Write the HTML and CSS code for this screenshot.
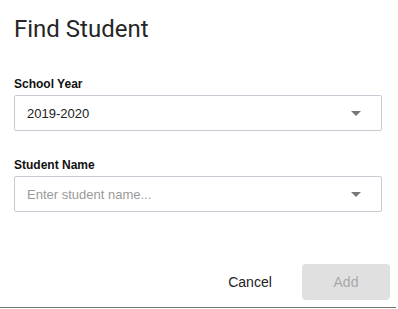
FILE: index.html
```html
<!DOCTYPE html>
<html lang="en">
<head>
    <meta charset="UTF-8">
    <meta name="viewport" content="width=device-width, initial-scale=1.0">
    <title>Find Student</title>
    <link rel="stylesheet" href="styles.css">
</head>
<body>
    <div class="dialog">
        <h1 class="dialog-title">Find Student</h1>

        <!-- School year -->
        <div class="field">
            <label class="field-label">School Year</label>
            <div class="select">
                <span class="select-value">2019-2020</span>
                <span class="select-arrow"></span>
            </div>
        </div>

        <!-- Student name -->
        <div class="field field-second">
            <label class="field-label">Student Name</label>
            <div class="select">
                <span class="select-value placeholder">Enter student name...</span>
                <span class="select-arrow"></span>
            </div>
        </div>

        <div class="dialog-actions">
            <button class="btn btn-text">Cancel</button>
            <button class="btn btn-disabled" disabled>Add</button>
        </div>
    </div>
</body>
</html>
```

FILE: styles.css
```css
body {
    margin: 0;
    padding: 0;
    background-color: #fff;
    font-family: "Liberation Sans", Arial, sans-serif;
}
.dialog {
    box-sizing: border-box;
    width: 396px;
    height: 308px;
    padding: 15px 14px 0 14px;
    border-bottom: 1px solid #737373;
}
.dialog-title {
    margin: 0;
    font-family: Roboto, sans-serif;
    font-weight: 400;
    font-size: 24px;
    line-height: 28px;
    color: #262626;
}
.field {
    margin-top: 34px;
}
.field-second {
    margin-top: 27px;
}
.field-label {
    display: block;
    font-size: 12px;
    font-weight: bold;
    line-height: 14px;
    color: #111;
    margin-bottom: 4px;
}
.select {
    box-sizing: border-box;
    height: 36px;
    border: 1px solid #cac9d4;
    border-radius: 2px;
    display: flex;
    align-items: center;
    justify-content: space-between;
    padding: 0 20px 0 12px;
}
.select-value {
    font-size: 13px;
    color: #222;
}
.select-value.placeholder {
    color: #9a9a9a;
}
.select-arrow {
    width: 0;
    height: 0;
    border-left: 5px solid transparent;
    border-right: 5px solid transparent;
    border-top: 5px solid #777;
    margin-top: 1px;
}
.dialog-actions {
    display: flex;
    justify-content: flex-end;
    gap: 8px;
    margin-top: 52px;
    margin-right: -8px;
}
.btn {
    min-width: 88px;
    height: 36px;
    border: none;
    border-radius: 4px;
    font-family: "Liberation Sans", Arial, sans-serif;
    font-size: 14px;
    padding: 0 16px;
    background: none;
}
.btn-text {
    color: #222;
    cursor: pointer;
}
.btn-disabled {
    background-color: #e0e0e0;
    color: #a8a8a8;
}
```
